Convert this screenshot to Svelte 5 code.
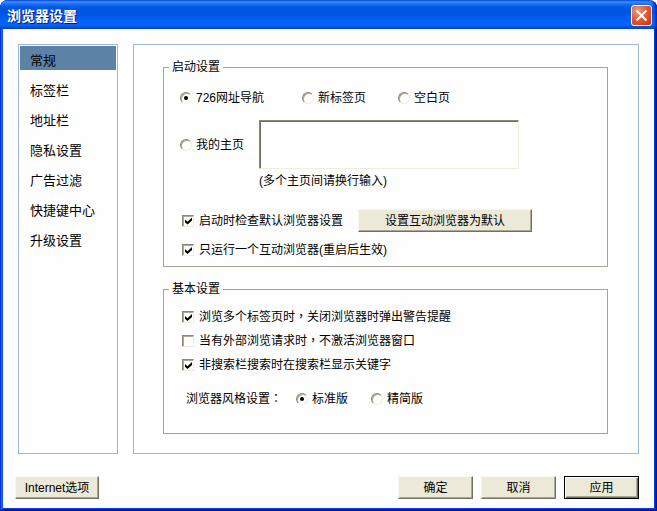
<script>
  const sections = ['常规', '标签栏', '地址栏', '隐私设置', '广告过滤', '快捷键中心', '升级设置']
  let section = $state('常规')

  let startup = $state('nav')
  let homepages = $state('')
  let checkDefault = $state(true)
  let singleInstance = $state(true)

  let warnOnClose = $state(true)
  let keepInactive = $state(false)
  let showKeyword = $state(true)
  let skin = $state('standard')
</script>

<div class="window">
  <header class="titlebar">
    <h1>浏览器设置</h1>
    <button class="close" type="button" aria-label="关闭">
      <svg viewBox="0 0 19 19" aria-hidden="true">
        <path d="M4.5 4.5 L14.5 14.5 M14.5 4.5 L4.5 14.5" />
      </svg>
    </button>
  </header>

  <div class="body">
    <nav class="sidebar">
      {#each sections as name}
        <button type="button" class:active={section === name} onclick={() => section = name}>{name}</button>
      {/each}
    </nav>

    <main class="panel">
      <fieldset class="startup">
        <legend>启动设置</legend>
        <div class="choices">
          <label><input type="radio" name="startup" value="nav" bind:group={startup} />726网址导航</label>
          <label><input type="radio" name="startup" value="newtab" bind:group={startup} />新标签页</label>
          <label><input type="radio" name="startup" value="blank" bind:group={startup} />空白页</label>
        </div>
        <div class="home">
          <label><input type="radio" name="startup" value="home" bind:group={startup} />我的主页</label>
          <textarea aria-label="我的主页" aria-describedby="home-hint" bind:value={homepages}></textarea>
          <p id="home-hint">(多个主页间请换行输入)</p>
        </div>
        <div class="default">
          <label class="check"><input type="checkbox" bind:checked={checkDefault} />启动时检查默认浏览器设置</label>
          <button type="button" class="btn wide">设置互动浏览器为默认</button>
        </div>
        <label class="check single"><input type="checkbox" bind:checked={singleInstance} />只运行一个互动浏览器(重启后生效)</label>
      </fieldset>

      <fieldset class="basic">
        <legend>基本设置</legend>
        <div class="checks">
          <label class="check"><input type="checkbox" bind:checked={warnOnClose} /><span>浏览多个标签页时<span class="mark">，</span>关闭浏览器时弹出警告提醒</span></label>
          <label class="check"><input type="checkbox" bind:checked={keepInactive} /><span>当有外部浏览请求时<span class="mark">，</span>不激活浏览器窗口</span></label>
          <label class="check"><input type="checkbox" bind:checked={showKeyword} />非搜索栏搜索时在搜索栏显示关键字</label>
        </div>
        <div class="skin" role="radiogroup" aria-labelledby="skin-label">
          <span id="skin-label">浏览器风格设置<span class="mark">：</span></span>
          <label><input type="radio" name="skin" value="standard" bind:group={skin} />标准版</label>
          <label><input type="radio" name="skin" value="simple" bind:group={skin} />精简版</label>
        </div>
      </fieldset>
    </main>
  </div>

  <footer>
    <button type="button" class="btn internet">Internet选项</button>
    <button type="button" class="btn">确定</button>
    <button type="button" class="btn">取消</button>
    <button type="button" class="btn primary">应用</button>
  </footer>
</div>

<style>
:global(body) {
  margin: 0;
  background: #fff;
}

.window, button, textarea {
  font-family: "Liberation Sans", "Noto Sans CJK SC", sans-serif;
  font-size: 12px;
  line-height: 16px;
  color: #000;
}

.window {
  display: flex;
  flex-direction: column;
  box-sizing: border-box;
  min-height: 100vh;
  padding: 0 3px 3px;
  border-radius: 8px 8px 0 0;
  overflow: hidden;
  background: #fefefe;
  box-shadow:
    inset 1px 0 #0831d9,
    inset -1px -1px #00138c,
    inset 2px 0 #166aee,
    inset -2px -2px #001ea0,
    inset 3px 0 #0855dd,
    inset -3px -3px #0441e0;
}

.titlebar {
  display: flex;
  align-items: center;
  justify-content: space-between;
  box-sizing: border-box;
  height: 29px;
  margin: 0 -3px;
  padding: 2px 5px 0 7px;
  border-radius: 8px 8px 0 0;
  background: linear-gradient(
    #0a4fd6 0, #3a8cff 2px, #1a70f5 4px, #0058e6 7px,
    #0053e1 13px, #005ff5 19px, #0066ff 25px, #0053dc 27px, #003dd0 29px);
  box-shadow: inset -2px 0 1px #0030b0;
}

h1 {
  margin: 0;
  font-size: 14px;
  line-height: 20px;
  font-weight: bold;
  color: #fff;
  text-shadow: 1px 1px #0a1883;
}

.close {
  width: 21px;
  height: 21px;
  padding: 0;
  border: 1px solid #fff;
  border-radius: 3px;
  background: radial-gradient(circle at 30% 25%, #f09a80, #e35a35 45%, #d8441a 75%, #b83210);
}

.close svg {
  display: block;
  width: 19px;
  height: 19px;
  fill: none;
  stroke: #fff;
  stroke-width: 2.2;
}

.body {
  display: flex;
  flex: 1;
  gap: 15px;
  padding: 15px 15px 0;
}

.sidebar {
  display: flex;
  flex-direction: column;
  gap: 6px;
  box-sizing: border-box;
  flex: 0 0 100px;
  padding: 1px;
  border: 1px solid #9db6d9;
}

.sidebar button {
  height: 24px;
  padding: 5px 0 0 10px;
  border: 0;
  background: none;
  font-size: 13px;
  line-height: 20px;
  text-align: left;
}

.sidebar button.active {
  background: #5c82a6;
}

.panel {
  flex: 1;
  min-width: 0;
  padding: 15px 30px 19px 29px;
  border: 1px solid #9db6d9;
}

fieldset {
  min-width: 0;
  margin: 0;
  border: 1px solid #a5a395;
}

legend {
  height: 14px;
  margin-left: -11px;
  padding: 0 3px;
  line-height: 14px;
}

.startup {
  padding: 16px 16px 8px;
}

.basic {
  margin-top: 15px;
  padding: 13px 16px 26px;
}

label {
  display: flex;
  align-items: center;
  gap: 4px;
  white-space: nowrap;
}

.check {
  gap: 5px;
  margin-left: 2px;
}

/* centred full-width punctuation */
.mark {
  font-family: "Noto Sans CJK TC", sans-serif;
  line-height: 12px;
}

input {
  appearance: none;
  flex: none;
  box-sizing: border-box;
  width: 12px;
  height: 12px;
  margin: 0;
  border: 1px solid;
  border-color: #8a8778 #efedde #efedde #8a8778;
  box-shadow: inset 1px 1px #aca899;
  background: #fff;
}

input[type="radio"] {
  display: grid;
  place-content: center;
  border-radius: 50%;
}

input[type="radio"]:checked::before {
  content: "";
  width: 4px;
  height: 4px;
  border-radius: 2px;
  background: #000;
}

input[type="checkbox"]:checked::before {
  content: "";
  display: block;
  width: 7px;
  height: 7px;
  margin: 2px;
  background: #000;
  clip-path: polygon(0 28%, 36% 62%, 100% 0, 100% 42%, 36% 100%, 0 68%);
}

.choices {
  display: grid;
  grid-template-columns: 122px 96px 1fr;
}

.home {
  display: grid;
  grid-template-columns: 79px 260px;
  row-gap: 4px;
  margin-top: 14px;
}

textarea {
  box-sizing: border-box;
  width: 100%;
  height: 49px;
  padding: 2px;
  border: 1px solid;
  border-color: #8a8778 #efedde #efedde #8a8778;
  box-shadow: inset 1px 1px #716f64;
  background: #fff;
  resize: none;
}

.home p {
  grid-column: 2;
  margin: 0;
}

.default {
  display: flex;
  align-items: center;
  gap: 15px;
  margin-top: 20px;
}

.single {
  margin-top: 10px;
}

.checks {
  display: grid;
  gap: 8px;
}

.skin {
  display: flex;
  margin: 18px 0 0 6px;
}

.skin label {
  margin-left: 14px;
}

.skin label + label {
  margin-left: 23px;
}

.btn {
  box-sizing: border-box;
  width: 75px;
  height: 23px;
  padding: 0;
  border: 1px solid;
  border-color: #f8f7f0 #716f64 #716f64 #f8f7f0;
  box-shadow: inset -1px -1px #aca899;
  background: #ece9d8;
}

.btn.wide {
  width: 174px;
}

.btn.primary {
  border-color: #000;
  box-shadow: inset 1px 1px #fff, inset -1px -1px #716f64, inset -2px -2px #aca899;
}

footer {
  display: flex;
  gap: 8px;
  padding: 22px 15px 9px 12px;
}

.internet {
  width: 84px;
  margin-right: auto;
}
</style>
